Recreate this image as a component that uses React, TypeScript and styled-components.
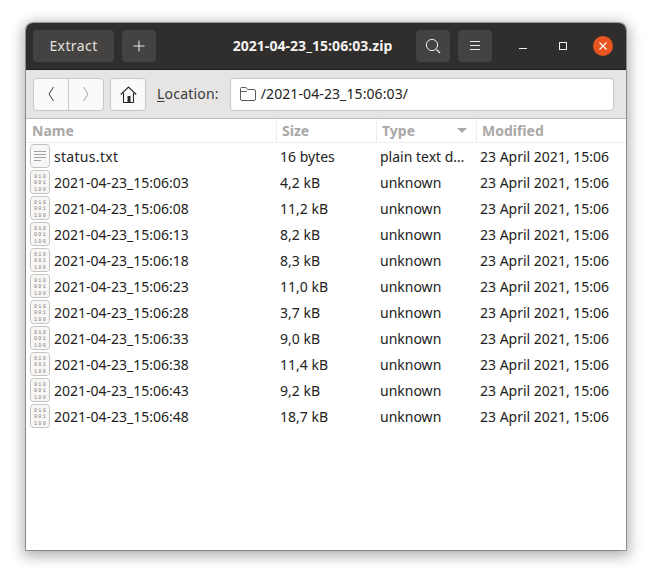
import React from 'react';
import styled, { createGlobalStyle } from 'styled-components';

const GlobalStyle = createGlobalStyle`
  html, body {
    margin: 0;
    padding: 0;
    background: #ffffff;
  }
`

const Page = styled.div`
  width: 652px;
  height: 579px;
  padding: 23px 26px 29px;
  box-sizing: border-box;
  overflow: hidden;
  font-family: "Noto Sans", sans-serif;
  font-size: 14px;
`

const Window = styled.div`
  width: 600px;
  height: 527px;
  display: flex;
  flex-direction: column;
  background: #ffffff;
  border-radius: 7px 7px 0 0;
  box-shadow: 0 0 0 1px rgba(0, 0, 0, .3), 0 3px 14px 3px rgba(0, 0, 0, .32);
`

const HeaderBar = styled.div`
  height: 47px;
  flex: none;
  display: flex;
  align-items: center;
  padding: 0 7px;
  box-sizing: border-box;
  gap: 8px;
  background: #302e2d;
  border-radius: 7px 7px 0 0;
  border-bottom: 1px solid #1f1d1c;
  position: relative;
`

const HeaderButton = styled.div<{ $width: number }>`
  width: ${({ $width }) => $width}px;
  height: 32px;
  display: flex;
  align-items: center;
  justify-content: center;
  background: #454341;
  border-radius: 4px;
  color: #e4e2df;
  font-size: 14px;
  letter-spacing: .4px;
  svg { display: block; }
`

const ExtractButton = styled(HeaderButton)`
  padding-bottom: 2px;
  box-sizing: border-box;
`

const WindowTitle = styled.div`
  flex: 1;
  text-align: center;
  color: #f4f2f0;
  font-weight: 700;
  font-size: 14px;
  letter-spacing: .05px;
  padding: 0 0 2px 53px;
`

const WindowControl = styled.div<{ $left: number }>`
  width: 20px;
  height: 20px;
  margin-left: ${({ $left }) => $left}px;
  display: flex;
  align-items: center;
  justify-content: center;
  svg { display: block; }
`

const CloseControl = styled(WindowControl)`
  background: #e95420;
  border-radius: 50%;
  margin-right: 6px;
`

const Toolbar = styled.div`
  height: 49px;
  flex: none;
  display: flex;
  align-items: center;
  padding: 0 12px 0 7px;
  box-sizing: border-box;
  background: #e6e5e4;
  border-bottom: 1px solid #bdbbb9;
`

const NavGroup = styled.div`
  display: flex;
  height: 33px;
  background: #fafafa;
  border: 1px solid #c9c7c5;
  border-radius: 4px;
  box-sizing: border-box;
  margin-right: 6px;
`

const NavButton = styled.div<{ $divider?: boolean }>`
  width: 34px;
  display: flex;
  align-items: center;
  justify-content: center;
  border-left: ${({ $divider }) => ($divider ? '1px solid #c9c7c5' : 'none')};
  svg { display: block; }
`

const LocationLabel = styled.div`
  color: #3d3c3b;
  font-size: 14px;
  letter-spacing: .2px;
  margin: 0 11px 0 5px;
  padding-bottom: 2px;
  u { text-underline-offset: 2px; }
`

const LocationField = styled.div`
  flex: 1;
  height: 33px;
  display: flex;
  align-items: center;
  gap: 5px;
  padding-left: 9px;
  box-sizing: border-box;
  background: #ffffff;
  border: 1px solid #c9c7c5;
  border-radius: 4px;
  color: #232221;
  font-size: 14px;
  letter-spacing: .1px;
  svg { display: block; }
`

const LocationPath = styled.span`
  padding-bottom: 2px;
`

const ColumnHeader = styled.div`
  height: 24px;
  flex: none;
  display: grid;
  grid-template-columns: 250px 100px 100px 1fr;
  box-sizing: border-box;
  border-bottom: 1px solid #eeeded;
`

const HeaderCell = styled.div`
  display: flex;
  align-items: center;
  justify-content: space-between;
  padding: 0 9px 0 5px;
  font-weight: 700;
  font-size: 14px;
  color: #a9a8a7;
  border-left: 1px solid #eeeded;
  &:first-child { border-left: none; padding-left: 6px; }
`

const SortArrow = styled.span`
  width: 0;
  height: 0;
  border-left: 5px solid transparent;
  border-right: 5px solid transparent;
  border-top: 5px solid #a9a8a7;
`

const Row = styled.div`
  height: 26px;
  display: grid;
  grid-template-columns: 250px 100px 100px 1fr;
  align-items: center;
  color: #232221;
  font-size: 14px;
`

const NameCell = styled.div`
  display: flex;
  align-items: center;
  gap: 4px;
  padding-left: 4px;
  svg { display: block; flex: none; }
`

const WideName = styled.span`
  letter-spacing: .3px;
`

const Cell = styled.div`
  padding-left: 4px;
  white-space: nowrap;
`

const BackIcon = ({ flip, color }: { flip?: boolean; color: string }) => (
  <svg width="10" height="16" viewBox="0 0 10 16" style={flip ? { transform: 'scaleX(-1)' } : undefined}>
    <path d="M7.5 1 L3 8 L7.5 15" fill="none" stroke={color} strokeWidth="1" />
  </svg>
);

const HomeIcon = () => (
  <svg width="17" height="17" viewBox="0 0 17 17">
    <path d="M.8 8.5 L8.5 1 L16.2 8.5" fill="none" stroke="#2c2b2a" strokeWidth="1.1" />
    <path d="M3.5 7 V16.5 H13.5 V7" fill="none" stroke="#2c2b2a" strokeWidth="1.1" />
    <rect x="7.5" y="10" width="3" height="6.5" fill="#2c2b2a" />
  </svg>
);

const FolderIcon = () => (
  <svg width="16" height="14" viewBox="0 0 16 14">
    <path
      d="M1.5 .5 H6 L7.5 2.5 H14 Q15.5 2.5 15.5 4 V12 Q15.5 13.5 14 13.5 H2 Q.5 13.5 .5 12 V1.5 Q.5 .5 1.5 .5 Z M.5 4.5 H7"
      fill="none"
      stroke="#5e5c5a"
    />
  </svg>
);

const FileFrame = ({ children }: { children: React.ReactNode }) => (
  <svg width="20" height="24" viewBox="0 0 20 24">
    <rect x=".5" y=".5" width="19" height="23" rx="3" fill="#f8f7f6" stroke="#c4c3c2" />
    {children}
  </svg>
);

const TextFileIcon = () => (
  <FileFrame>
    <path d="M4 7.5 H16 M4 10.5 H16 M4 13.5 H16 M4 16.5 H11" stroke="#a3a2a1" strokeWidth="1" />
  </FileFrame>
);

const BinaryFileIcon = () => (
  <FileFrame>
    <g fontFamily="'Liberation Mono', monospace" fontSize="5.2" fill="#807f7e" textAnchor="middle" letterSpacing="1.2">
      <text x="10.5" y="8.2">010</text>
      <text x="10.5" y="14.4">001</text>
      <text x="10.5" y="20.6">100</text>
    </g>
  </FileFrame>
);

const rows = [
  ['2021-04-23_15:06:03', '4,2 kB'],
  ['2021-04-23_15:06:08', '11,2 kB'],
  ['2021-04-23_15:06:13', '8,2 kB'],
  ['2021-04-23_15:06:18', '8,3 kB'],
  ['2021-04-23_15:06:23', '11,0 kB'],
  ['2021-04-23_15:06:28', '3,7 kB'],
  ['2021-04-23_15:06:33', '9,0 kB'],
  ['2021-04-23_15:06:38', '11,4 kB'],
  ['2021-04-23_15:06:43', '9,2 kB'],
  ['2021-04-23_15:06:48', '18,7 kB'],
];

const App: React.FunctionComponent = () => {
  return (
    <Page>
      <GlobalStyle />
      <Window>
        <HeaderBar>
          <ExtractButton $width={81}>Extract</ExtractButton>
          <HeaderButton $width={34}>
            <svg width="12" height="12" viewBox="0 0 12 12">
              <path d="M6 .5 V11.5 M.5 6 H11.5" stroke="#eeecea" strokeWidth="1" />
            </svg>
          </HeaderButton>
          <WindowTitle>2021-04-23_15:06:03.zip</WindowTitle>
          <HeaderButton $width={34}>
            <svg width="16" height="16" viewBox="0 0 16 16">
              <circle cx="7" cy="7" r="5.6" fill="none" stroke="#eeecea" strokeWidth="1" />
              <path d="M11.5 11.5 L15 15" stroke="#eeecea" strokeWidth="1.3" />
            </svg>
          </HeaderButton>
          <HeaderButton $width={34}>
            <svg width="12" height="10" viewBox="0 0 12 10">
              <path d="M1 .5 H11 M1 4.5 H11 M1 8.5 H11" stroke="#eeecea" strokeWidth="1" />
            </svg>
          </HeaderButton>
          <WindowControl $left={13}>
            <svg width="10" height="10" viewBox="0 0 10 10">
              <path d="M1 7.5 H9" stroke="#f4f2f0" strokeWidth="1" />
            </svg>
          </WindowControl>
          <WindowControl $left={12}>
            <svg width="10" height="10" viewBox="0 0 10 10">
              <rect x="1.5" y="1.5" width="7" height="7" fill="none" stroke="#f4f2f0" strokeWidth="1" />
            </svg>
          </WindowControl>
          <CloseControl $left={12}>
            <svg width="10" height="10" viewBox="0 0 10 10">
              <path d="M1.5 1.5 L8.5 8.5 M8.5 1.5 L1.5 8.5" stroke="#ffffff" strokeWidth="1.2" />
            </svg>
          </CloseControl>
        </HeaderBar>
        <Toolbar>
          <NavGroup>
            <NavButton><BackIcon color="#3d3c3b" /></NavButton>
            <NavButton $divider><BackIcon flip color="#a5a4a3" /></NavButton>
          </NavGroup>
          <NavGroup>
            <NavButton><HomeIcon /></NavButton>
          </NavGroup>
          <LocationLabel><u>L</u>ocation:</LocationLabel>
          <LocationField>
            <FolderIcon />
            <LocationPath>/2021-04-23_15:06:03/</LocationPath>
          </LocationField>
        </Toolbar>
        <ColumnHeader>
          <HeaderCell>Name</HeaderCell>
          <HeaderCell>Size</HeaderCell>
          <HeaderCell>Type<SortArrow /></HeaderCell>
          <HeaderCell>Modified</HeaderCell>
        </ColumnHeader>
        <Row>
          <NameCell><TextFileIcon /><WideName>status.txt</WideName></NameCell>
          <Cell>16 bytes</Cell>
          <Cell>plain text d…</Cell>
          <Cell>23 April 2021, 15:06</Cell>
        </Row>
        {rows.map(([name, size]) => (
          <Row key={name}>
            <NameCell><BinaryFileIcon />{name}</NameCell>
            <Cell>{size}</Cell>
            <Cell>unknown</Cell>
            <Cell>23 April 2021, 15:06</Cell>
          </Row>
        ))}
      </Window>
    </Page>
  );
}

export default App;
